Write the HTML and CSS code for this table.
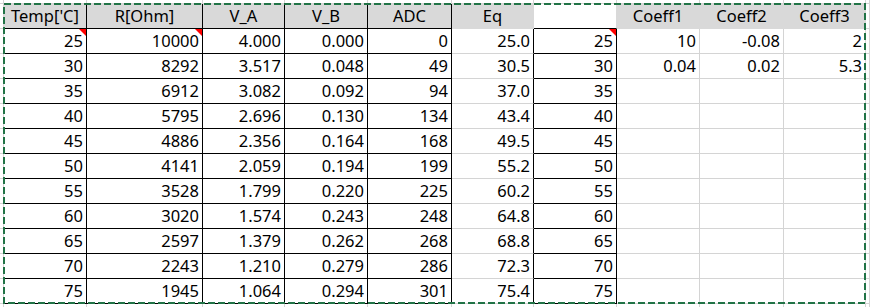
FILE: index.html
```html
<!DOCTYPE html>
<html>
<head>
<meta charset="utf-8">
<link rel="stylesheet" href="styles.css">
</head>
<body>
<div class="sheet">
  <div class="grid">
    <div class="e"></div><div class="e"></div><div class="e"></div><div class="e"></div><div class="e"></div><div class="e"></div><div class="e"></div><div class="e"></div><div class="e"></div><div class="e"></div><div class="e"></div><div class="e"></div>

    <div class="e"></div><div class="h k">Temp['C]</div><div class="h k">R[Ohm]</div><div class="h k">V_A</div><div class="h k">V_B</div><div class="h k">ADC</div><div class="h fr fb">Eq</div><div class="gh"></div><div class="h fr fb">Coeff1</div><div class="h fr fb">Coeff2</div><div class="h fb">Coeff3</div><div class="e"></div>

    <div class="e"></div><div class="k cm">25</div><div class="k cm">10000</div><div class="k">4.000</div><div class="k">0.000</div><div class="k">0</div><div class="kr">25.0</div><div class="k cm">25</div><div>10</div><div>-0.08</div><div>2</div><div class="e"></div>
    <div class="e"></div><div class="k">30</div><div class="k">8292</div><div class="k">3.517</div><div class="k">0.048</div><div class="k">49</div><div class="kr">30.5</div><div class="k">30</div><div>0.04</div><div>0.02</div><div>5.3</div><div class="e"></div>
    <div class="e"></div><div class="k">35</div><div class="k">6912</div><div class="k">3.082</div><div class="k">0.092</div><div class="k">94</div><div class="kr">37.0</div><div class="k">35</div><div></div><div></div><div></div><div class="e"></div>
    <div class="e"></div><div class="k">40</div><div class="k">5795</div><div class="k">2.696</div><div class="k">0.130</div><div class="k">134</div><div class="kr">43.4</div><div class="k">40</div><div></div><div></div><div></div><div class="e"></div>
    <div class="e"></div><div class="k">45</div><div class="k">4886</div><div class="k">2.356</div><div class="k">0.164</div><div class="k">168</div><div class="kr">49.5</div><div class="k">45</div><div></div><div></div><div></div><div class="e"></div>
    <div class="e"></div><div class="k">50</div><div class="k">4141</div><div class="k">2.059</div><div class="k">0.194</div><div class="k">199</div><div class="kr">55.2</div><div class="k">50</div><div></div><div></div><div></div><div class="e"></div>
    <div class="e"></div><div class="k">55</div><div class="k">3528</div><div class="k">1.799</div><div class="k">0.220</div><div class="k">225</div><div class="kr">60.2</div><div class="k">55</div><div></div><div></div><div></div><div class="e"></div>
    <div class="e"></div><div class="k">60</div><div class="k">3020</div><div class="k">1.574</div><div class="k">0.243</div><div class="k">248</div><div class="kr">64.8</div><div class="k">60</div><div></div><div></div><div></div><div class="e"></div>
    <div class="e"></div><div class="k">65</div><div class="k">2597</div><div class="k">1.379</div><div class="k">0.262</div><div class="k">268</div><div class="kr">68.8</div><div class="k">65</div><div></div><div></div><div></div><div class="e"></div>
    <div class="e"></div><div class="k">70</div><div class="k">2243</div><div class="k">1.210</div><div class="k">0.279</div><div class="k">286</div><div class="kr">72.3</div><div class="k">70</div><div></div><div></div><div></div><div class="e"></div>
    <div class="e"></div><div class="k">75</div><div class="k">1945</div><div class="k">1.064</div><div class="k">0.294</div><div class="k">301</div><div class="kr">75.4</div><div class="k">75</div><div></div><div></div><div></div><div class="e"></div>

    <div class="e"></div><div class="e"></div><div class="e"></div><div class="e"></div><div class="e"></div><div class="e"></div><div class="e"></div><div class="e"></div><div class="e"></div><div class="e"></div><div class="e"></div><div class="e"></div>
  </div>
  <svg class="marquee" width="870" height="307" viewBox="0 0 870 307">
    <rect x="4" y="4" width="861" height="299" fill="none" stroke="#217346" stroke-width="2" stroke-dasharray="7 3"/>
  </svg>
</div>
</body>
</html>
```

FILE: styles.css
```css
body {
  margin: 0;
  background: #ffffff;
}

.sheet {
  position: relative;
  width: 870px;
  height: 307px;
  overflow: hidden;
}

.grid {
  display: grid;
  grid-template-columns: 4px 83px 116px 82px 83px 84px 82px 83px 83px 84px 82px 4px;
  grid-template-rows: 4px repeat(12, 25px) 4px;
  font-family: "Noto Sans", "Open Sans", sans-serif;
  font-size: 16.5px;
  color: #000000;
}

.grid > div {
  box-sizing: border-box;
  position: relative;
  border-right: 1px solid #d4d4d4;
  border-bottom: 1px solid #d4d4d4;
  padding: 0 3px;
  text-align: right;
  line-height: 24px;
  white-space: nowrap;
  overflow: hidden;
}

.grid > .e {
  padding: 0;
}

.grid > .h {
  background: #d9d9d9;
  text-align: center;
}

.grid > .k {
  border-right-color: #000000;
  border-bottom-color: #000000;
}

.grid > .kr {
  border-right-color: #000000;
}

.grid > .fr {
  border-right-color: #d9d9d9;
}

.grid > .fb {
  border-bottom-color: #d9d9d9;
}

.grid > .gh {
  border-right-color: #d9d9d9;
  border-bottom-color: #000000;
}

.grid > .cm::after {
  content: "";
  position: absolute;
  top: 0;
  right: 0;
  border-top: 7px solid #ff0000;
  border-left: 7px solid transparent;
}

.marquee {
  position: absolute;
  left: 0;
  top: 0;
  pointer-events: none;
}
```
